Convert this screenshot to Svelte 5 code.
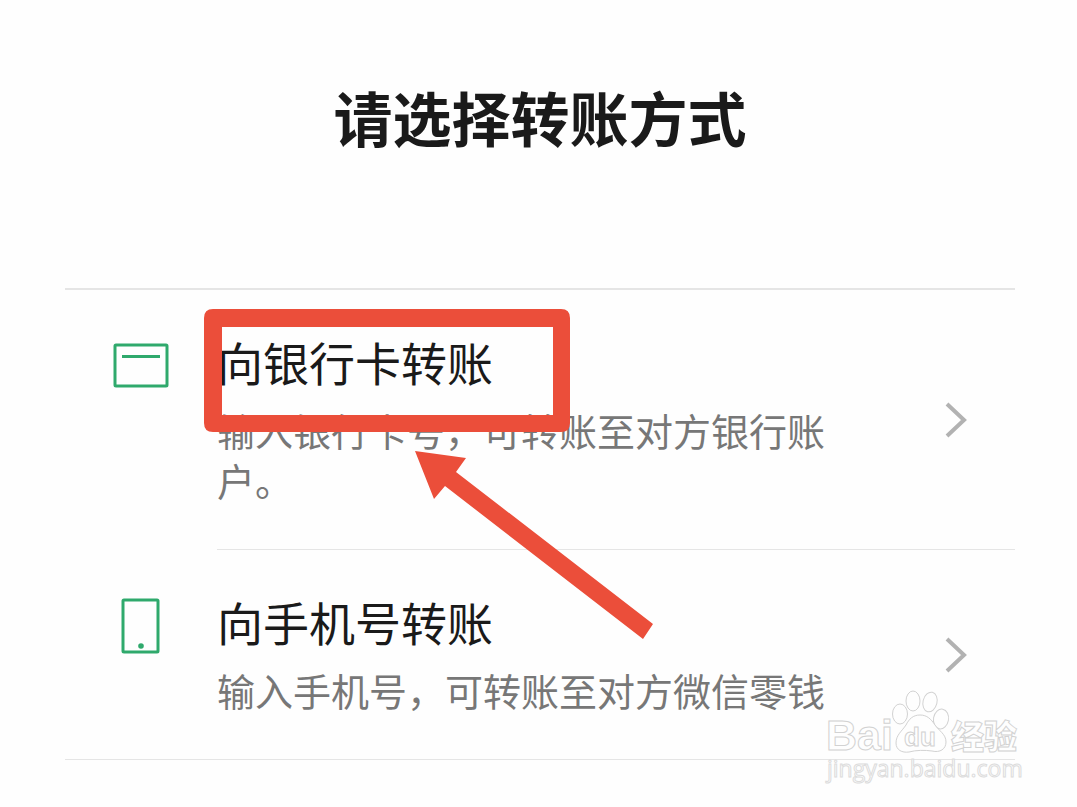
<script lang="ts">
const methods = [
    {
        icon: 'card',
        name: '向银行卡转账',
        desc: '输入银行卡号，可转账至对方银行账户。',
    },
    {
        icon: 'phone',
        name: '向手机号转账',
        desc: '输入手机号，可转账至对方微信零钱',
    },
];
</script>

<main>
    <h1>请选择转账方式</h1>

    <div class="list">
        {#each methods as method}
            <a class="method" href="#{method.icon}">
                <svg class="icon" viewBox="0 0 56 68" aria-hidden="true">
                    {#if method.icon === 'card'}
                        <rect x="2" y="13" width="52" height="41" rx="1" />
                        <path d="M9 24.5H47" />
                    {:else}
                        <rect x="10" y="9" width="35" height="52" rx="1" />
                        <circle cx="28" cy="55" r="2.8" />
                    {/if}
                </svg>
                <div class="body">
                    <div class="text">
                        <h2>{method.name}</h2>
                        <p>{method.desc}</p>
                    </div>
                    <svg class="arrow" viewBox="0 0 22 36" aria-hidden="true">
                        <path d="M2 2L19 18L2 34" />
                    </svg>
                </div>
            </a>
        {/each}

        <!-- red frame and pointer over the first method -->
        <svg class="marker" viewBox="0 0 450 331" aria-hidden="true">
            <path fill-rule="evenodd" d="M9 0H357Q366 0 366 9V114Q366 123 357 123H9Q0 123 0 114V9Q0 0 9 0ZM18 18V106H349V18Z" />
            <path d="M211 142L262 149L252 163L449 315L439 330L241 177L230 190Z" />
        </svg>
    </div>

    <svg class="watermark" viewBox="0 0 200 100">
        <text class="bai" x="4" y="61">Bai</text>
        <ellipse cx="78" cy="25" rx="7.5" ry="10" />
        <ellipse cx="91" cy="12" rx="7" ry="10" />
        <ellipse cx="108" cy="13" rx="7" ry="10" transform="rotate(14 108 13)" />
        <ellipse cx="119" cy="30" rx="7.5" ry="10" transform="rotate(10 119 30)" />
        <path d="M98 26C91 26 87 30 84 36C80 42 74 46 74 54C74 61 80 64 87 63C94 61 103 61 110 62C118 64 124 60 124 53C124 45 117 42 113 36C109 30 105 26 98 26Z" />
        <text class="du" x="82" y="57">du</text>
        <text class="jingyan" x="129" y="60">经验</text>
        <text class="site" x="5" y="88">jingyan.baidu.com</text>
    </svg>
</main>

<style>
:global(body) {
    margin: 0;
    background: #fefefe;
}

main {
    position: relative;
    padding: 77px 62px 46px 65px;
    font-family: "Noto Sans CJK SC", sans-serif;
    color: #1a1a1a;
}

h1 {
    margin: 0 0 131px;
    font-size: 59px;
    line-height: 80px;
    font-weight: bold;
    text-align: center;
}

h2 {
    margin: 0 0 10px;
    font-size: 46px;
    line-height: 68px;
    font-weight: normal;
}

p {
    margin: 0;
    font-size: 38px;
    line-height: 50px;
    color: #777;
}

.list {
    position: relative;
    border-top: 2px solid #e5e5e5;
    border-bottom: 1px solid #e5e5e5;
}

.method {
    display: flex;
    gap: 48px;
    padding-left: 48px;
    color: inherit;
    text-decoration: none;
}

.icon {
    flex: none;
    width: 56px;
    height: 68px;
    margin-top: 42px;
    fill: none;
    stroke: #2fa96c;
    stroke-width: 3;
}

.icon circle {
    fill: #2fa96c;
    stroke: none;
}

.body {
    flex: 1;
    display: flex;
    align-items: center;
    gap: 88px;
    padding-right: 48px;
}

.method + .method .body {
    border-top: 1px solid #e5e5e5;
}

.text {
    flex: 1;
    padding: 37px 0 44px;
}

.arrow {
    flex: none;
    width: 22px;
    height: 36px;
    fill: none;
    stroke: #b2b2b2;
    stroke-width: 4;
}

.marker {
    position: absolute;
    top: 19px;
    left: 139px;
    width: 450px;
    height: 331px;
    fill: #eb4e3a;
    pointer-events: none;
}

.watermark {
    position: absolute;
    right: 55px;
    bottom: 17px;
    width: 200px;
    height: 100px;
    fill: #fefefe;
    stroke: #d2d2d2;
    stroke-width: 1;
    overflow: visible;
    pointer-events: none;
}

.bai,
.du {
    font-family: "Liberation Sans", sans-serif;
    font-weight: bold;
}

.bai {
    font-size: 43px;
}

.du {
    font-size: 26px;
}

.jingyan {
    font-size: 33px;
    font-weight: 900;
}

.site {
    font-family: "Open Sans", sans-serif;
    font-size: 23px;
    stroke: #dcdcdc;
}
</style>
